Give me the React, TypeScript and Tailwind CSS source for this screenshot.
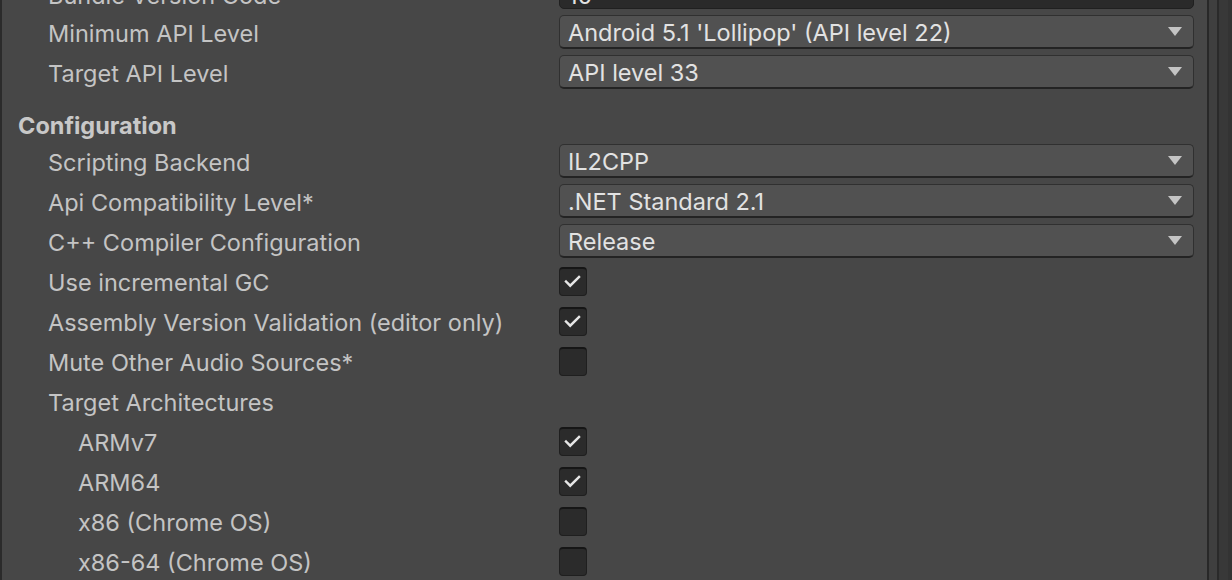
import React from "react";

const font = { fontFamily: "Inter, 'Noto Sans', sans-serif" };

function Arrow() {
  return (
    <svg width="14" height="9" viewBox="0 0 14 9" className="shrink-0">
      <polygon points="0,0 14,0 7,9" fill="#c4c4c4" />
    </svg>
  );
}

function Dropdown({ value }: { value: string }) {
  return (
    <div className="flex h-[34px] flex-1 items-center justify-between rounded-[5px] border border-[#303030] border-b-[#232323] border-b-2 bg-[#515151] pl-[8px] pr-[11px]">
      <span className="pt-[3px] text-[#e2e2e2]">{value}</span>
      <Arrow />
    </div>
  );
}

function Checkbox({ checked }: { checked: boolean }) {
  return (
    <div className="flex h-[29px] w-[28px] items-center justify-center rounded-[4px] border border-[#1f1f1f] border-t-[#161616] border-t-2 bg-[#2b2b2b]">
      {checked && (
        <svg width="28" height="28" viewBox="0 0 28 28">
          <path d="M6.5 13.5 L11 18 L20.5 8.5" fill="none" stroke="#e6e6e6" strokeWidth="2.6" strokeLinecap="square" />
        </svg>
      )}
    </div>
  );
}

function Row({
  label,
  indent = "pl-[46px]",
  children,
}: {
  label: string;
  indent?: string;
  children?: React.ReactNode;
}) {
  return (
    <div className="flex h-[40px] shrink-0 items-center">
      <div className={`w-[557px] shrink-0 pt-[3px] text-[#c4c4c4] ${indent}`}>{label}</div>
      <div className="flex flex-1 items-center">{children}</div>
    </div>
  );
}

export default function App() {
  return (
    <div
      className="flex h-[580px] w-[1232px] overflow-hidden bg-[#474747] text-[23.5px] leading-none"
      style={font}
    >
      <div className="w-[2px] shrink-0 bg-[#2b2b2b]" />
      <div className="flex flex-1 flex-col pr-[13px]">
        <div className="flex h-[12px] shrink-0 flex-col justify-end overflow-hidden">
          <div className="flex h-[40px] shrink-0 items-center">
            <div className="w-[557px] shrink-0 pl-[46px] pt-[8px] text-[#c4c4c4]">Bundle Version Code</div>
            <div className="flex h-[34px] flex-1 items-center rounded-[5px] border border-[#202020] bg-[#2a2a2a] pl-[8px] pt-[8px] text-[#e2e2e2]">
              10
            </div>
          </div>
        </div>
        <Row label="Minimum API Level">
          <Dropdown value="Android 5.1 'Lollipop' (API level 22)" />
        </Row>
        <Row label="Target API Level">
          <Dropdown value="API level 33" />
        </Row>
        <div className="flex h-[49px] shrink-0 items-center pl-[16px] pt-[19px] font-bold text-[#c8c8c8]">
          Configuration
        </div>
        <Row label="Scripting Backend">
          <Dropdown value="IL2CPP" />
        </Row>
        <Row label="Api Compatibility Level*">
          <Dropdown value=".NET Standard 2.1" />
        </Row>
        <Row label="C++ Compiler Configuration">
          <Dropdown value="Release" />
        </Row>
        <Row label="Use incremental GC">
          <Checkbox checked />
        </Row>
        <Row label="Assembly Version Validation (editor only)">
          <Checkbox checked />
        </Row>
        <Row label="Mute Other Audio Sources*">
          <Checkbox checked={false} />
        </Row>
        <Row label="Target Architectures" />
        <Row label="ARMv7" indent="pl-[76px]">
          <Checkbox checked />
        </Row>
        <Row label="ARM64" indent="pl-[76px]">
          <Checkbox checked />
        </Row>
        <Row label="x86 (Chrome OS)" indent="pl-[76px]">
          <Checkbox checked={false} />
        </Row>
        <Row label="x86-64 (Chrome OS)" indent="pl-[76px]">
          <Checkbox checked={false} />
        </Row>
      </div>
      <div className="w-[2px] shrink-0 bg-[#282828]" />
      <div className="w-[8px] shrink-0 bg-[#3f3f3f]" />
      <div className="w-[2px] shrink-0 bg-[#2a2a2a]" />
      <div className="w-[9px] shrink-0 bg-[#383838]" />
      <div className="w-[4px] shrink-0 bg-[#333333]" />
    </div>
  );
}
